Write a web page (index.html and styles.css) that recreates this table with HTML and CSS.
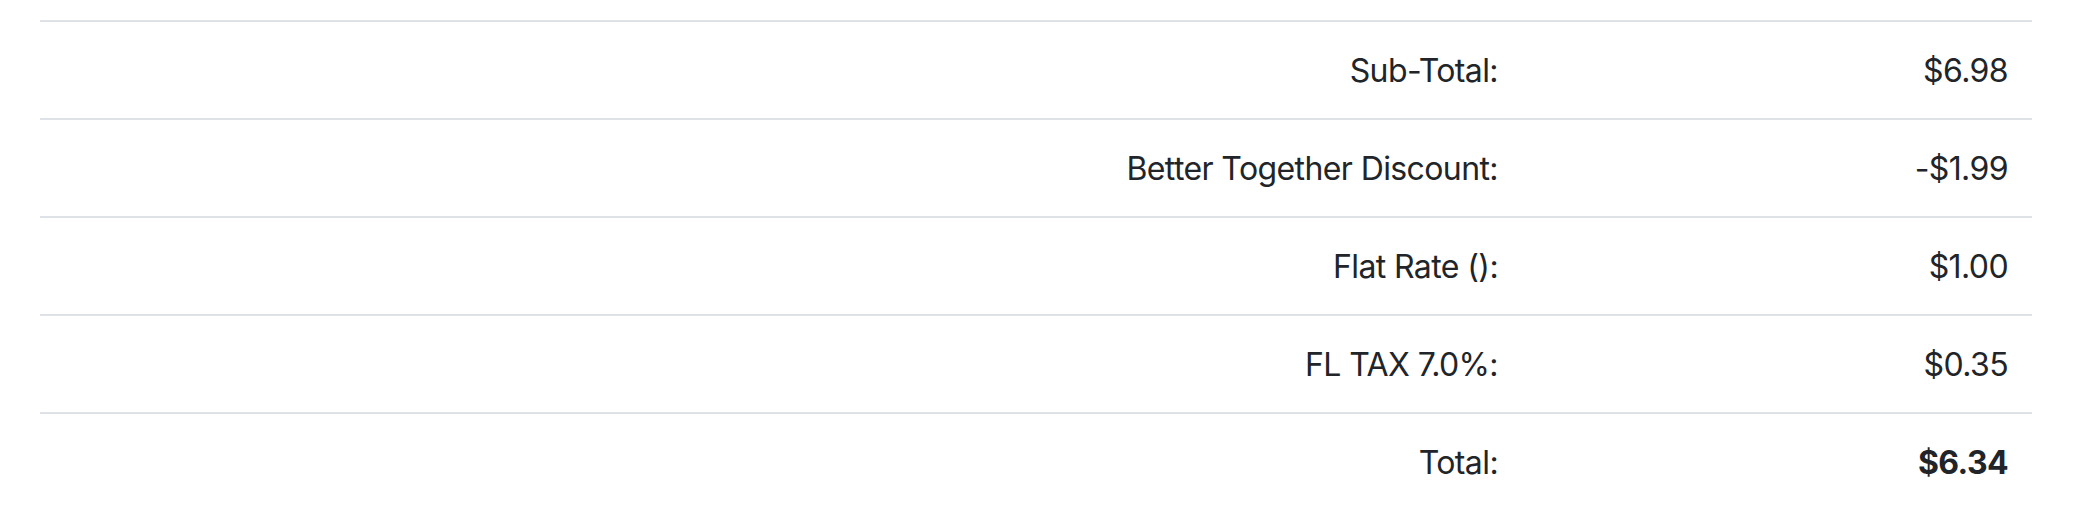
FILE: index.html
```html
<!DOCTYPE html>
<html>
<head>
<meta charset="utf-8">
<link rel="stylesheet" href="styles.css">
</head>
<body>
<div class="wrap">
<table class="totals">
<tbody>
<tr><td class="label">Sub-Total:</td><td class="value">$6.98</td></tr>
<tr><td class="label">Better Together Discount:</td><td class="value">-$1.99</td></tr>
<tr><td class="label">Flat Rate ():</td><td class="value">$1.00</td></tr>
<tr><td class="label">FL TAX 7.0%:</td><td class="value">$0.35</td></tr>
<tr><td class="label">Total:</td><td class="value strong">$6.34</td></tr>
</tbody>
</table>
</div>
</body>
</html>
```
FILE: styles.css
```css
html, body {
  margin: 0;
  padding: 0;
  background: #fff;
}
body {
  font-family: Inter, "Noto Sans", "Liberation Sans", sans-serif;
  font-size: 32px;
  line-height: 48px;
  letter-spacing: -0.6px;
  color: #212529;
}
.wrap {
  padding: 20px 48px 20px 40px;
}
.totals {
  width: 100%;
  border-collapse: collapse;
}
.totals td {
  border-top: 2px solid #dee2e6;
  padding: 25px 24px 23px;
  text-align: right;
  vertical-align: top;
}
.totals .value {
  width: 462px;
}
.strong {
  font-weight: 700;
}
```
